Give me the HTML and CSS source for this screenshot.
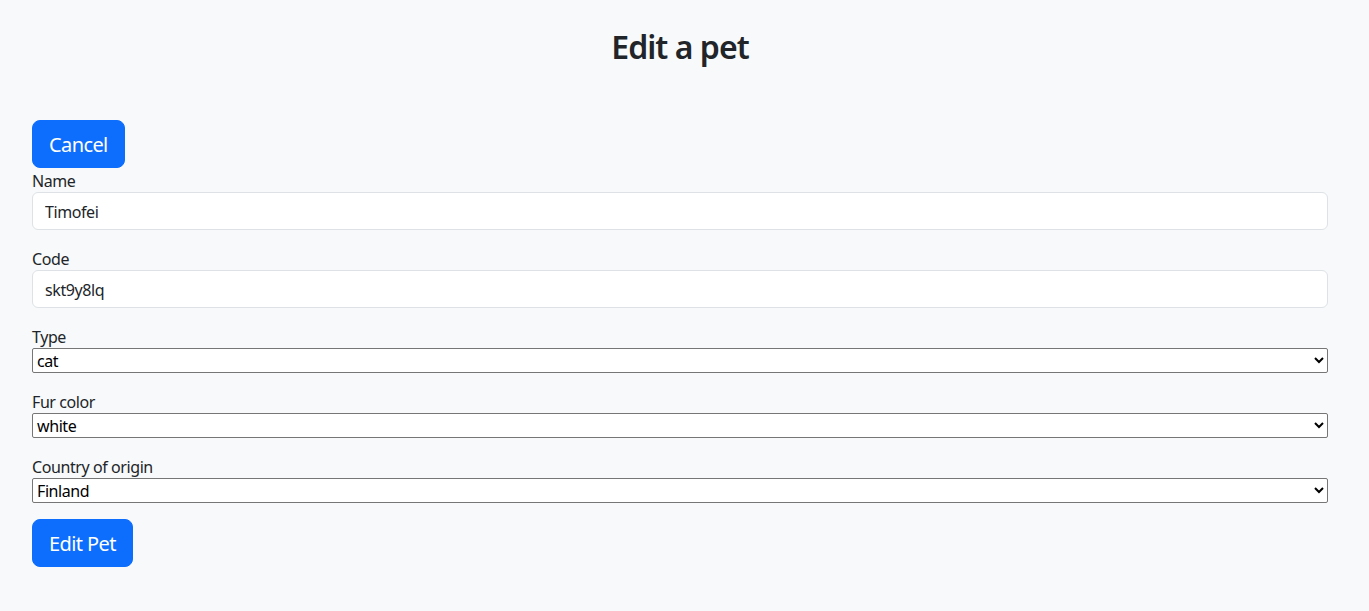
FILE: index.html
```html
<!DOCTYPE html>
<html lang="en">
<head>
<meta charset="utf-8">
<title>Edit a pet</title>
<link rel="stylesheet" href="styles.css">
</head>
<body>
<div class="page">
  <h1 class="title">Edit a pet</h1>
  <div class="content">
    <button class="btn" type="button">Cancel</button>
    <form class="form">
      <div class="field">
        <label class="label" for="name">Name</label>
        <input class="input" id="name" type="text" value="Timofei">
      </div>
      <div class="field">
        <label class="label" for="code">Code</label>
        <input class="input" id="code" type="text" value="skt9y8lq">
      </div>
      <div class="field">
        <label class="label" for="type">Type</label>
        <select class="select" id="type"><option>cat</option><option>dog</option></select>
      </div>
      <div class="field">
        <label class="label" for="fur">Fur color</label>
        <select class="select" id="fur"><option>white</option><option>black</option></select>
      </div>
      <div class="field">
        <label class="label" for="country">Country of origin</label>
        <select class="select" id="country"><option>Finland</option><option>Sweden</option></select>
      </div>
      <button class="btn" type="button">Edit Pet</button>
    </form>
  </div>
</div>
</body>
</html>
```
FILE: styles.css
```css
* { box-sizing: border-box; }
html, body {
  margin: 0;
  padding: 0;
  background: #f8f9fa;
  color: #212529;
  font-family: "Noto Sans", "Open Sans", sans-serif;
  font-size: 16px;
  line-height: 1.5;
  letter-spacing: -0.026em;
}
.page {
  width: 1360px;
  padding: 0 32px;
}
.title {
  margin: 0;
  padding-top: 28px;
  text-align: center;
  font-size: 32px;
  font-weight: 600;
  line-height: 1.2;
  height: 120px;
  letter-spacing: -0.03em;
}
.content {
  display: flex;
  flex-direction: column;
  align-items: flex-start;
}
.form {
  width: 100%;
  display: flex;
  flex-direction: column;
  align-items: flex-start;
}
.field {
  width: 100%;
  display: flex;
  flex-direction: column;
  margin-bottom: 16px;
}
.label {
  display: block;
  line-height: 24px;
  height: 24px;
  padding-top: 1px;
}
.btn {
  font-family: inherit;
  font-size: 20px;
  line-height: 30px;
  letter-spacing: -0.03em;
  padding: 9px 16px 7px;
  color: #fff;
  background: #0d6efd;
  border: 1px solid #0d6efd;
  border-radius: 8px;
  cursor: pointer;
}
.input {
  width: 100%;
  height: 38px;
  padding: 7px 12px 5px;
  font-family: inherit;
  font-size: 16px;
  line-height: 24px;
  letter-spacing: inherit;
  color: #212529;
  background: #fff;
  border: 1px solid #dee2e6;
  border-radius: 6px;
}
.select {
  width: 100%;
  height: 25px;
  font-family: inherit;
  font-size: 16px;
  letter-spacing: inherit;
  color: #000;
  background: #fff;
  border: 1px solid #767676;
  border-radius: 2px;
  padding: 0;
}
```
